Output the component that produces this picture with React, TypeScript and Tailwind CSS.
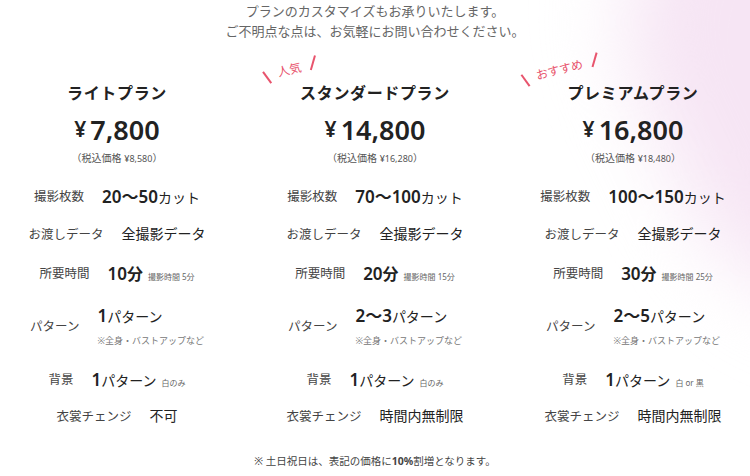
import type { ReactNode } from 'react';

const FONT = 'font-["Noto_Sans","Noto_Sans_CJK_JP",sans-serif]';

type Row = {
  label: string;
  value: ReactNode;
  note?: string;
  mt: string;
};

interface Plan {
  name: string;
  price: string;
  tax: string;
  badge?: { text: string; left: string };
  rows: Row[];
}

// ─── 値の表示 ────────────────────────────────────────────────────────────────

function Num({ n, unit }: { n: string; unit: string }) {
  return (
    <span className="flex items-baseline text-[#222]">
      <span className="text-[17px] font-semibold">{n}</span>
      <span className="text-[14px]">{unit}</span>
    </span>
  );
}

function Small({ children }: { children: ReactNode }) {
  return <span className="ml-[5px] text-[8px] text-[#666]">{children}</span>;
}

const makeRows = (
  cut: string,
  time: string,
  shoot: string,
  pattern: string,
  bg: string,
  change: string
): Row[] => [
  {
    label: '撮影枚数',
    mt: 'mt-[19px]',
    value: <Num n={cut} unit="カット" />,
  },
  {
    label: 'お渡しデータ',
    mt: 'mt-[14px]',
    value: <span className="text-[14px] text-[#222]">全撮影データ</span>,
  },
  {
    label: '所要時間',
    mt: 'mt-[15px]',
    value: (
      <span className="flex items-baseline text-[#222]">
        <span className="text-[17px] font-semibold">{time}</span>
        <span className="text-[16px] font-semibold">分</span>
        <Small>撮影時間 {shoot}分</Small>
      </span>
    ),
  },
  {
    label: 'パターン',
    mt: 'mt-[18px]',
    note: '※全身・バストアップなど',
    value: <Num n={pattern} unit="パターン" />,
  },
  {
    label: '背景',
    mt: 'mt-[19px]',
    value: (
      <span className="flex items-baseline text-[#222]">
        <span className="text-[17px] font-semibold">1</span>
        <span className="text-[14px]">パターン</span>
        <Small>{bg}</Small>
      </span>
    ),
  },
  {
    label: '衣裳チェンジ',
    mt: 'mt-[13px]',
    value: <span className="text-[14px] text-[#222]">{change}</span>,
  },
];

const PLANS: Plan[] = [
  {
    name: 'ライトプラン',
    price: '7,800',
    tax: '8,580',
    rows: makeRows('20〜50', '10', '5', '1', '白のみ', '不可'),
  },
  {
    name: 'スタンダードプラン',
    price: '14,800',
    tax: '16,280',
    badge: { text: '人気', left: 'left-[-35px]' },
    rows: makeRows('70〜100', '20', '15', '2〜3', '白のみ', '時間内無制限'),
  },
  {
    name: 'プレミアムプラン',
    price: '16,800',
    tax: '18,480',
    badge: { text: 'おすすめ', left: 'left-[-44px]' },
    rows: makeRows('100〜150', '30', '25', '2〜5', '白 or 黒', '時間内無制限'),
  },
];

// ─── バッジ ──────────────────────────────────────────────────────────────────

function Badge({ text, left }: { text: string; left: string }) {
  return (
    <div
      className={`absolute ${left} top-[-19px] flex h-[16px] items-center gap-[11px] -rotate-[14deg] text-[12px] leading-none text-[#e8546d]`}
    >
      <span className="block h-[14px] w-[1.5px] bg-[#e8546d] -rotate-[22deg] translate-y-[2px]" />
      <span>{text}</span>
      <span className="block h-[15px] w-[1.5px] bg-[#e8546d] rotate-[30deg] -translate-y-[2px]" />
    </div>
  );
}

// ─── 列 ──────────────────────────────────────────────────────────────────────

function PlanColumn({ plan }: { plan: Plan }) {
  return (
    <div className="flex flex-col items-center">
      <div className="relative h-[24px]">
        {plan.badge && <Badge {...plan.badge} />}
        <h3 className="text-[16px] leading-[24px] font-bold tracking-[0.04em] text-[#222]">
          {plan.name}
        </h3>
      </div>

      <div className="mt-[6px] flex h-[36px] items-center gap-[4px] text-[#222]">
        <span className="text-[21px] font-semibold leading-none">¥</span>
        <span className="text-[27px] font-semibold leading-none">{plan.price}</span>
      </div>

      <p className="mt-[4px] h-[14px] text-[10px] leading-[14px] text-[#555]">
        （税込価格 <span className="text-[9px]">¥{plan.tax}</span>）
      </p>

      {plan.rows.map((r) => (
        <div key={r.label} className={`${r.mt} flex items-center justify-center gap-[18px]`}>
          <span className="h-[24px] pt-[1px] text-[12.5px] leading-[24px] text-[#444]">
            {r.label}
          </span>
          <div className="flex flex-col">
            <div className="flex h-[24px] items-center leading-none">{r.value}</div>
            {r.note && (
              <span className="mt-[7px] h-[14px] text-[9px] leading-[14px] text-[#777]">
                {r.note}
              </span>
            )}
          </div>
        </div>
      ))}
    </div>
  );
}

export default function App() {
  return (
    <div className={`relative h-[476px] w-full overflow-hidden bg-white ${FONT}`}>
      {/* 右上の淡いグラデーション */}
      <div className="absolute left-[650px] top-[-160px] h-[470px] w-[360px] rotate-[-25deg] rounded-full bg-[#f6e5f4] blur-[40px]" />

      <div className="relative flex flex-col items-center pt-[1px]">
        <p className="text-center text-[13px] leading-[20px] text-[#666]">
          プランのカスタマイズもお承りいたします。
          <br />
          ご不明点な点は、お気軽にお問い合わせください。
        </p>

        <div className="mt-[40px] grid grid-cols-[230px_230px_230px] gap-x-[28px]">
          {PLANS.map((p) => (
            <PlanColumn key={p.name} plan={p} />
          ))}
        </div>

        <p className="mt-[25px] h-[16px] text-[10.5px] leading-[16px] text-[#444]">
          ※ 土日祝日は、表記の価格に<span className="font-bold">10%</span>割増となります。
        </p>
      </div>
    </div>
  );
}
